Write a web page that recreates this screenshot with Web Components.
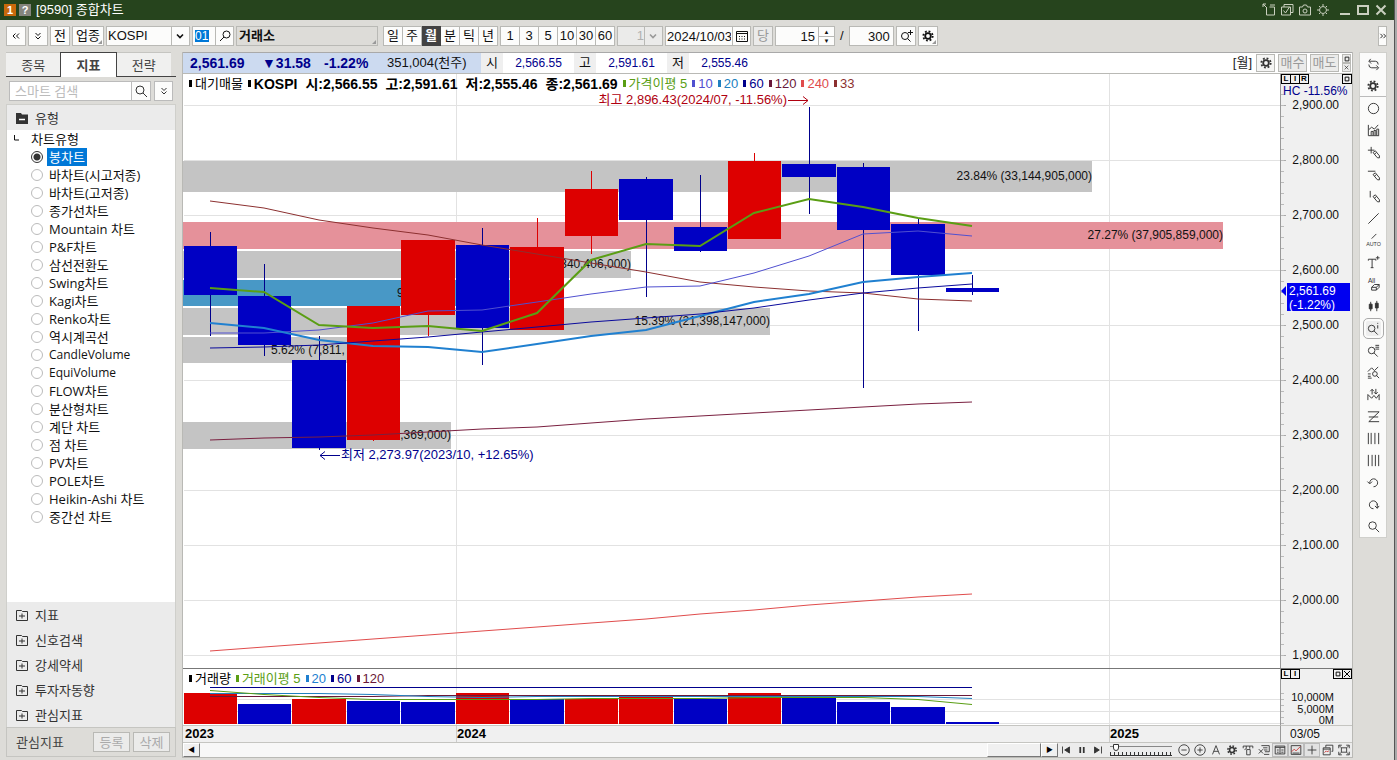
<!DOCTYPE html>
<html lang="ko">
<head>
<meta charset="utf-8">
<title>[9590] 종합차트</title>
<style>
html,body{margin:0;height:100%}
body{font:13px/16px "Liberation Sans","Noto Sans CJK KR",sans-serif;color:#111;background:#dddcd8}
</style>
</head>
<body>
<chart-window>
  <title-bar slot="title">[9590] 종합차트</title-bar>
  <tool-bar slot="tools"></tool-bar>
  <side-panel slot="side"></side-panel>
  <chart-panel slot="main"></chart-panel>
  <draw-tools slot="draw"></draw-tools>
</chart-window>
<script>
const gear='<circle cx="8" cy="8" r="2.8" stroke-width="1.8"/><circle cx="8" cy="8" r="4.7" stroke-width="1.8" stroke-dasharray="1.85 1.84"/>';
const pencil='<path d="M7.5 8l4.5 5.5 2.2.3.2-2.2L10 6.2zM9 9.8l2.2-1.8"/>';
const ICONS={
 gear,
 dleft:'<path d="M7.500 5.500L5 8l2.500 2.500M11 5.500L8.500 8l2.500 2.500"/>',
 dright:'<path d="M5 5.500L7.500 8 5 10.500M8.500 5.500L11 8l-2.500 2.500"/>',
 ddown:'<path d="M5.500 5L8 7.500 10.500 5M5.500 8.500L8 11l2.500-2.500"/>',
 down:'<path stroke-width="1.600" d="M5 6.500L8 9.500l3-3"/>',
 search:'<circle cx="7" cy="7" r="4"/><path d="M10 10l4 4"/>',
 searchl:'<circle cx="9.500" cy="6.500" r="3.500"/><path d="M7 9l-4 4"/>',
 searchp:'<circle cx="7" cy="8" r="3.500"/><path d="M9.500 10.500l3 3M12.500 2v5M10 4.500h5"/>',
 cal:'<path d="M2.500 3.500h11v10h-11zM2.500 5.500h11"/><path stroke-dasharray="1 1.500" d="M5 8.500h7M5 11h7"/>',
 detach:'<path d="M5.500 5.500v7.500h8V5h-5M2 2l4 4M2 5V2h3M9 3h5"/>',
 copy:'<path d="M5 5V2.500h9v8h-2M2.500 5h9v8h-9zM4.500 8.500l2 2.500 4-6"/>',
 camera:'<path d="M2.500 5h3l1-2h3l1 2h3v8h-11z"/><circle cx="8" cy="9" r="2"/>',
 sun:'<circle cx="8" cy="8" r="3.500"/><path d="M8 2v2M8 12v2M2 8h2M12 8h2M4 4l1 1M11 11l1 1M12 4l-1 1M5 11l-1 1"/>',
 min:'<path stroke-width="2" d="M3 12h10"/>',
 max:'<path stroke-width="2" d="M3 4h10v8H3z"/>',
 close:'<path stroke-width="2" d="M3.500 3.500l9 9M12.500 3.500l-9 9"/>',
 swap:'<path d="M5 2L3 4.500 5.500 7M3.500 4.500H10q3 0 3 3.500M11 9l2.500 2.500-2.500 2.500M12.500 11.500H6q-3 0-3-3.500"/>',
 circle:'<circle cx="8" cy="8" r="5.500"/>',
 bars:'<path d="M2.500 2v11.500H14M3 7l3-2.500 3 2 4-4.500M5.500 13V9h2v4M8.500 13V8h2v5M11.500 13V6.500h2V13"/>',
 crosspen:'<path d="M2 5.500h7M5.500 2v7"/>'+pencil,
 linepen:'<path d="M2 4.500h8"/>'+pencil,
 vertpen:'<path d="M4.500 2v7"/>'+pencil,
 diag:'<path d="M2.500 13.500l11-11"/>',
 auto:'<path d="M6 6l5-5"/><text x="8" y="14" text-anchor="middle" font-size="5.700" fill="currentColor" stroke="none" font-family="Liberation Sans">AUTO</text>',
 tplus:'<path d="M2.500 6V4.500h8V6M6.500 4.500v9M5 13.500h3M10.500 3h4M12.500 1v4"/>',
 all:'<text x="2" y="6" font-size="7" fill="currentColor" stroke="none" font-family="Liberation Sans">All</text><path d="M6 11l3-3h5l-3 3zM6 11v3h5v-3M11 14l3-3V8"/>',
 candles:'<path d="M5 3v10M11.500 2v11"/><path fill="currentColor" d="M3.500 5.500h3v5h-3zM10 4.500h3v5h-3z"/>',
 searchi:'<circle cx="6" cy="8" r="3.500"/><path d="M8.500 10.500l4 4M12.500 4.500V8M12.500 2v1"/>',
 searche:'<circle cx="6" cy="8" r="3.500"/><path d="M8.500 10.500l4 4M10 2.500h4M10 4.500h4M10 6.500h4"/>',
 searchw:'<path d="M2 7l4-4 3 3 4-4M2 9.500h3M2 12h3M2 14h4"/><circle cx="9.500" cy="9.500" r="2.500"/><path d="M11 11l3 3"/>',
 updown:'<path d="M2 14V8l4 4 2.500-3L11 12l3-4v6M6.500 8V2.500M4.500 4.500l2-2 2 2M10.500 2v5.500M8.500 5.500l2 2 2-2"/>',
 zed:'<path d="M2 3h12L3 13.500h11M3 8.500h10"/>',
 v1:'<path d="M2.500 2v12M5.500 2v12M9.500 2v12M13.500 2v12"/>',
 v2:'<path d="M2.500 2v12M6.500 2v12M10 2v12M13.500 2v12"/>',
 undo:'<path d="M4 8.500A4.200 4.200 0 1 1 8 12.500M1.500 7L4 9.500 6.500 7"/>',
 redo:'<path d="M12 8.500A4.200 4.200 0 1 0 8 12.500M9.500 9.500l2.500 2.500 2-2.500M12 7v5"/>',
 first:'<path d="M4 4v8"/><path fill="currentColor" d="M12 4.500v7L6.500 8z"/>',
 pause:'<path stroke-width="2" d="M6 4.500v7M10 4.500v7"/>',
 last:'<path d="M12 4v8"/><path fill="currentColor" d="M4 4.500v7L9.500 8z"/>',
 minus:'<circle cx="8" cy="8" r="6"/><path d="M5 8h6"/>',
 plus:'<circle cx="8" cy="8" r="6"/><path d="M5 8h6M8 5v6"/>',
 aa:'<path d="M4 13L8 3l4 10M5.500 9.500h5"/>',
 tool:'<path d="M2.500 6V3.500h11V6M6 3.500v3l-2 1M10 3.500v3M6.500 13.500v-6h4v6z"/>',
 xchart:'<path d="M5 3h9v7H9M2 7l5 5M7 7l-5 5M7 5.500h5M8 8h4M8 13h6"/>',
 table:'<path d="M2.500 3.500h11v9h-11zM2.500 5h11"/><path d="M4.500 8h2M9.500 8h2.500M4.500 10.500h2M9.500 10.500h2.500M8 5.500v7"/>',
 chart:'<path d="M2.500 3h11v10h-11z"/><path stroke="#c33" d="M3 10l3-3 2 2 5-5"/><path d="M4 11.500h8"/>',
 cross:'<path d="M8 3v10M3 8h10"/>',
 wins:'<path d="M5.500 5V2.500h8v7H12M2.500 5.500h8v8h-8zM2.500 7h8"/><path stroke="#c33" d="M4 11l2-2 1 1 2-1"/>',
 full:'<path d="M2 6V2.500h3.500M10.500 2.500H14V6M14 10v3.500h-3.500M5.500 13.500H2V10M5 5.500h6v5H5zM2.500 3L5 5.500M13.500 3L11 5.500M13.500 13L11 10.500M2.500 13L5 10.500"/>',
 folderopen:'<path fill="currentColor" stroke="none" d="M2 3h5l1 1.500h6V14H2z"/><path stroke="#fff" stroke-width="1.500" d="M5 9.500h6"/>',
 folder:'<path d="M2.500 3.500h5l1 1h5v9h-11zM5 9h6M8 6.500v5"/>',
 corner:'<path d="M3.500 4v5H8"/>',
 box:'<path stroke-width="2.500" d="M3 3h10v10H3z"/>',
 x:'<path stroke-width="2" d="M2 2l12 12M14 2L2 14"/>'
};
const icon=(n,s=16)=>`<svg class="ic" width="${s}" height="${s}" viewBox="0 0 16 16" fill="none" stroke="currentColor" aria-hidden="true">${ICONS[n]}</svg>`;
const BASE=`*,:host{box-sizing:border-box}.ic{display:block;flex:none;overflow:visible}
button,input,select{font:inherit;color:inherit;margin:0;padding:0;border-radius:0;outline:0}
button{display:flex;align-items:center;justify-content:center;background:none;border:0}`;
function make(tag,css,html,ready){
  const t=document.createElement('template');
  t.innerHTML=`<style>${BASE}${css}</style>${html}`;
  customElements.define(tag,class extends HTMLElement{
    constructor(){super();this.attachShadow({mode:'open'}).append(t.content.cloneNode(true));}
    connectedCallback(){if(ready)ready.call(this,this.shadowRoot);}
  });
}

make('chart-window',`
:host{display:flex;flex-direction:column;height:100vh;min-height:600px;background:#dddcd8;border-right:2px solid #a9a9a9;box-shadow:inset -1px 0 #555}
.body{flex:1;display:flex;min-height:0;padding:0 8px 2px 6px;align-items:stretch}
.side{width:170px;margin-right:6px;padding-bottom:1px;display:flex}
.main{flex:1;min-width:0;display:flex;margin-right:6px}
slot[name=draw]{display:block}
.side ::slotted(*),.main ::slotted(*){flex:1;min-width:0}`,
`<slot name="title"></slot><slot name="tools"></slot>
<div class="body"><div class="side"><slot name="side"></slot></div><div class="main"><slot name="main"></slot></div><slot name="draw"></slot></div>`);

make('title-bar',`
:host{display:flex;align-items:center;height:20px;flex:none;margin-right:1px;padding:0 5px 0 4px;background:#26441d;color:#fff}
.n{width:12px;height:12px;font:bold 11px/12px "Liberation Sans";text-align:center;background:#c8690c;margin-right:3px}
.q{background:#85857d;margin-right:5px}
.sp{flex:1}.w{color:#c9cfbf;display:flex;gap:2px}`,
`<span class="n">1</span><span class="n q">?</span><span><slot></slot></span><span class="sp"></span>
<span class="w"><button aria-label="분리">${icon('detach')}</button><button aria-label="복사">${icon('copy')}</button><button aria-label="캡처">${icon('camera')}</button><button aria-label="설정">${icon('sun')}</button></span>
<span class="w" style="margin-left:6px"><button aria-label="최소화">${icon('min')}</button><button aria-label="최대화">${icon('max')}</button><button aria-label="닫기">${icon('close')}</button></span>`);

make('tool-group',`:host{display:flex;gap:0}`,`<slot></slot>`);

make('tool-bar',`
:host{display:flex;flex:none;height:32px;align-items:center;gap:2px;padding:0 6px 0 6px;font-size:13px}
button,.box{height:20px;border:1px solid #b9b9b5;background:#fcfcfb}
button{width:20px;position:relative}
tool-group button{width:19px;border-left-width:0}
tool-group button:first-child{width:20px;border-left-width:1px}
.days{margin-left:3px}
.on{background:#424242;color:#fff;font-weight:bold;border-color:#424242}
.wide{width:32px}
.corner::after{content:"";position:absolute;right:1px;bottom:1px;border:2px solid #999;border-left-color:transparent;border-top-color:transparent}
.box{display:flex;align-items:center;position:relative}
.box input,.box select{border:0;background:none;width:100%;height:18px;padding:0 1px;appearance:none;min-width:0}
.box .ic{position:absolute;right:1px;pointer-events:none}
.box button{border:0;border-left:1px solid #b9b9b5;height:18px;width:18px;flex:none}
.box button .ic{position:static}
.box.arrow::before{content:"";position:absolute;right:17px;top:0;bottom:0;border-left:1px solid #b9b9b5}
.r input,.r select{text-align:right;text-align-last:right;padding-right:3px}
.dis{color:#999;background:#ebebea}
.box input.code{width:14px;flex:none;padding:0;margin-left:2px;font-size:12px;background:linear-gradient(#0078d7,#0078d7) 0 3px/14px 12px no-repeat;color:#fff}
.name{width:142px;padding-left:2px;background:#dddcd8;font-weight:bold}
.spin{display:flex;flex-direction:column;border-left:1px solid #b9b9b5}
.spin button{height:9px;width:15px;border:0;font-size:6px;line-height:8px}
.spin button+button{border-top:1px solid #b9b9b5}
.sp{flex:1}.more{width:9px;margin-right:2px}`,
`<button aria-label="이전">${icon('dleft')}</button><button aria-label="목록">${icon('ddown')}</button><button>전</button><button class="wide corner">업종</button>
<span class="box arrow" style="width:84px"><select aria-label="시장"><option>KOSPI</option></select>${icon('down')}</span>
<span class="box" style="width:42px"><input class="code" aria-label="업종코드" value="01"><span class="sp"></span><button aria-label="찾기">${icon('searchl')}</button></span>
<span class="box name corner">거래소</span>
<tool-group class="days"><button>일</button><button>주</button><button class="on">월</button><button>분</button><button>틱</button><button>년</button></tool-group>
<tool-group><button>1</button><button>3</button><button>5</button><button>10</button><button>30</button><button>60</button></tool-group>
<span class="box arrow r dis" style="width:46px"><select aria-label="간격" disabled style="padding-right:18px"><option>1</option></select>${icon('down')}</span>
<span class="box" style="width:86px"><input aria-label="날짜" value="2024/10/03"><button aria-label="달력">${icon('cal')}</button></span>
<button disabled class="dis">당</button>
<span class="box r" style="width:60px"><input aria-label="표시 개수" value="15"><span class="spin"><button aria-label="증가">▲</button><button aria-label="감소">▼</button></span></span>
<span style="padding:0 3px">/</span>
<span class="box r" style="width:45px"><input aria-label="전체 개수" value="300"></span>
<button aria-label="확대">${icon('searchp')}</button><button class="corner" aria-label="설정">${icon('gear')}</button>
<span class="sp"></span><button class="more" aria-label="더보기">${icon('dright',14)}</button>`);

const TYPES=['봉차트','바차트(시고저종)','바차트(고저종)','종가선차트','Mountain 차트','P&amp;F차트','삼선전환도','Swing차트','Kagi차트','Renko차트','역시계곡선','CandleVolume','EquiVolume','FLOW차트','분산형차트','계단 차트','점 차트','PV차트','POLE차트','Heikin-Ashi 차트','중간선 차트'];
make('side-group',`
:host{display:block}
button{width:100%;height:25px;justify-content:flex-start;gap:5px;padding-left:7px;color:#333}`,
`<button><span class="i"></span><slot></slot></button>`,
function(r){r.querySelector('.i').innerHTML=icon(this.hasAttribute('open')?'folderopen':'folder');});

make('side-panel',`
:host{display:flex;flex-direction:column;font-family:"Open Sans","Noto Sans CJK KR",sans-serif}
.tabs{display:flex;height:25px;border-bottom:1px solid #444;flex:none}
.tabs button{flex:1;background:#f0f0ef;border-top:1px solid #c5c5c1;color:#444}
.tabs .on{background:#fff;border:1px solid #444;border-bottom:0;margin-bottom:-1px;font-weight:bold}
.tabs button:last-child{margin-right:5px}
.search{display:flex;padding:4px 3px 3px;flex:none}
.search input{flex:1;min-width:0;height:20px;border:1px solid #bbb;background:#fff;padding:0 5px}
.search input::placeholder{color:#bbb;opacity:1}
.search button{width:19px;height:20px;border:1px solid #bbb;border-left:0;background:#fcfcfb;color:#333}
.search button:last-child{border-left:1px solid #bbb;margin-left:3px}
.panel{flex:1;display:flex;flex-direction:column;background:#fff;border:1px solid #cfcfcb;border-bottom:0;min-height:0}
.head{background:#ebebeb}
.tree{flex:1;overflow:hidden;font-size:12px}
.ko{font-size:13px}
.root{display:flex;align-items:center;height:18px;padding-left:4px;gap:4px;font-size:13px}
label{display:flex;align-items:center;height:18px;padding-left:24px;gap:4px}
label input{appearance:none;width:12px;height:12px;border:1px solid #bbb;border-radius:50%;background:#fff;flex:none}
label input:checked{border-color:#333;background:radial-gradient(circle,#333 0 3px,#fff 4px)}
label span{padding:0 2px;line-height:18px}
label input:checked+span{background:#0078d7;color:#fff}
.groups{background:#ebebeb;height:125px;flex:none}
.foot{display:flex;height:30px;flex:none;align-items:center;gap:3px;padding:0 5px 0 9px;border:1px solid #c5c5c1;color:#444}
.foot span{flex:1}
.foot button{width:37px;height:20px;border:1px solid #b9b9b5;background:#ebebea;color:#aaa}`,
`<div class="tabs"><button>종목</button><button class="on">지표</button><button>전략</button></div>
<div class="search"><input aria-label="검색" placeholder="스마트 검색"><button aria-label="검색">${icon('search')}</button><button aria-label="펼치기">${icon('ddown')}</button></div>
<div class="panel"><side-group class="head" open>유형</side-group>
<div class="tree"><div class="root">${icon('corner')}<span>차트유형</span></div>${TYPES.map((t,i)=>`<label${/^[A-Z][A-Za-z]+$/.test(t)?'':' class="ko"'}><input type="radio" name="t"${i?'':' checked'}><span>${t}</span></label>`).join('')}</div>
<div class="groups"><side-group>지표</side-group><side-group>신호검색</side-group><side-group>강세약세</side-group><side-group>투자자동향</side-group><side-group>관심지표</side-group></div></div>
<div class="foot"><span>관심지표</span><button disabled>등록</button><button disabled>삭제</button></div>`);

make('draw-tools',`
:host{display:flex;flex-direction:column;width:28px;background:#fbfbfa;border:1px solid #d0d0cc}
button{width:26px;height:22px;color:#333}
.gear{border-bottom:1px solid #bbb}
.on .ic{outline:1px solid #aaa;outline-offset:2px;background:#eee;border-radius:2px}`,
['swap','gear','circle','bars','crosspen','linepen','vertpen','diag','auto','tplus','all','candles','searchi','searche','searchw','updown','zed','v1','v2','undo','redo','search'].map(n=>`<button class="${n=='searchi'?'on':n}" aria-label="${n}">${icon(n,n=='gear'?16:15)}</button>`).join(''));

make('quote-bar',`
:host{display:flex;height:22px;flex:none;align-items:stretch;background:#fff;border-top:1px solid #a9a9a9;border-bottom:1px solid #b9b9b5;font-size:12px;line-height:20px;color:#00008c}
.now{display:flex;width:298px;background:#ccdaf0;padding-left:7px;font-size:14px;font-weight:bold}
.now span:nth-child(1){width:72px}.now span:nth-child(2){width:62px}.now span:nth-child(3){width:63px}
.now .vol{font-size:13px;font-weight:normal;color:#111}
.k{width:22px;background:#efefef;color:#111;text-align:center;font-size:13px}
.v{width:71px;text-align:center}
.sp{flex:1}.m{color:#222;margin-right:4px;font-size:13px}
.b{display:flex;gap:3px;align-items:center;padding-right:1px}
.b button{width:29px;height:18px;border:1px solid #b9b9b5;background:#ebebea;color:#999;font-size:13px}
.b .g{width:19px;background:#f5f5f4;color:#333}
.mini{display:flex;flex-direction:column}.b .mini button{width:9px;height:9px;color:#222}`,
`<div class="now"><span>2,561.69</span><span>▼31.58</span><span>-1.22%</span><span class="vol">351,004(천주)</span></div>
<span class="k">시</span><span class="v">2,566.55</span><span class="k">고</span><span class="v">2,591.61</span><span class="k">저</span><span class="v">2,555.46</span>
<span class="sp"></span><span class="m">[월]</span>
<div class="b"><button class="g" aria-label="설정">${icon('gear')}</button><button>매수</button><button>매도</button><span class="mini"><button aria-label="최대화">${icon('box',6)}</button><button aria-label="닫기">${icon('x',5)}</button></span></div>`);

make('legend-item',`
:host{display:flex;align-items:center;gap:3px;white-space:nowrap}
i{width:3px;height:7px;background:currentColor}`,`<i></i><slot></slot>`);

make('box-keys',`
:host{display:flex}
button{width:10px;height:10px;border:1px solid #000;font:bold 8px/8px "Liberation Sans";color:#000;margin-right:-1px}
.sp{flex:1}`,``,
function(r){const k=s=>(s||'').split(' ').map(c=>`<button aria-label="${c}">${ICONS[c]?icon(c,c=='box'?6:8):c}</button>`).join('');
 r.innerHTML+=k(this.getAttribute('left'))+'<span class="sp"></span>'+k(this.getAttribute('right'));});

/* Drawing units: one plot is 1097 wide from x=183; heights start at the plot's own top. */
const XS=[210,264,319,373,428,482,537,591,646,700,754,809,863,918,972];
const EDGE=[184,238,292,347,401,456,510,565,619,674,728,782,837,891,946,1000];
const RED='#dd0000',BLUE='#0000c4';
const CANDLES=[[0,246,295,232,336],[0,296,345,264,356],[0,360,448,336,450],[1,306,440,306,441],[1,240,315,240,336],[0,245,328,228,365],[1,247,330,218,330],[1,189,236,171,254],[0,179,220,177,297],[0,227,251,175,252],[1,161,239,153,239],[0,164,177,107,214],[0,167,230,163,388],[0,224,275,219,331],[0,288,292,275,295]];
const BANDS=[[161,192,1092,'#c4c4c4'],[222,249,1223,'#e5919a'],[251,278,631,'#c4c4c4'],[280,306,530,'#4898c6'],[308,335,770,'#c4c4c4'],[337,363,397,'#c4c4c4'],[422,449,451,'#c4c4c4']];
const LABELS=[[1092,180,'end','23.84% (33,144,905,000)'],[1223,239,'end','27.27% (37,905,859,000)'],[631,268,'end','340,406,000)'],[397,297,'start','9'],[770,325,'end','15.39% (21,398,147,000)'],[271,354,'start','5.62% (7,811,'],[451,439,'end',',369,000)']];
const MA=[['#7a2040',1,[440,438,437,435,432,429,427,423,419,416,413,410,407,404,402]],['#e04c4c',1,[651,647,643,639,635,631,627,623,619,614,610,605,601,597,594]],['#8c3030',1,[201,208,220,228,235,245,254,263,272,282,287,291,293,299,301]],['#5050d0',1,[333,333,330,323,311,310,302,294,287,286,273,256,234,231,236]],['#2080d0',2,[323,328,340,346,347,352,344,336,330,316,302,294,282,277,273]],['#0a0a9c',1,[348,347,345,341,337,332,327,322,318,314,308,300,293,288,284]],['#5a9e14',2,[288,292,325,328,326,331,313,260,244,246,213,199,207,218,226]]];
const VOL=[[1,693],[0,704],[1,699],[0,701],[0,702],[1,693],[0,699],[1,699],[1,697],[0,699],[1,693],[0,697],[0,702],[0,707],[0,722]];
const VMA=[['#00008c',[687,687,687,687,687,687,687,687,687,687,687,687,687,687,687]],['#6a1838',[696,696,696,696,695,695,695,695,695,695,695,695,695,695,695]],['#2080c0',[693,693,693,694,696,697,696,696,696,696,696,696,696,696,698]],['#5a9e14',[690,694,697,699,699,699,699,698,698,698,697,697,697,699,704]]];
const rect=(x,y,w,h,f)=>`<rect x="${x}" y="${y}" width="${Math.max(1,w)}" height="${Math.max(1,h)}" fill="${f}" shape-rendering="crispEdges"/>`;
const poly=(pts,c,w)=>`<polyline points="${pts}" fill="none" stroke="${c}" stroke-width="${w}"/>`;
function plot(tag,top,high,draw,vw=1097,left=183){
  make(tag,`:host{display:block;min-width:0;min-height:0;overflow:hidden;position:relative}
svg{display:block;position:absolute;inset:0;width:100%;height:100%;font:12px "Liberation Sans","Noto Sans CJK KR",sans-serif}`,`<svg></svg>`,
  function(r){
    const svg=r.querySelector('svg');
    const paint=()=>{const b=this.getBoundingClientRect();if(!b.width)return;
      const sx=b.width/vw,sy=b.height/high;
      svg.innerHTML=draw(x=>Math.round((x-left)*sx),y=>Math.round((y-top)*sy));};
    new ResizeObserver(paint).observe(this);
  });
}
const GRID='#e2e2e2';
plot('price-plot',74,594,(X,Y)=>{
  let s='';
  for(let y=105;y<=655;y+=55)s+=rect(X(184),Y(y),X(1281)-X(184),1,GRID);
  for(const x of [456,1109])s+=rect(X(x),0,1,Y(668),GRID);
  for(const [a,b,e,c] of BANDS)s+=rect(0,Y(a),X(e),Y(b)-Y(a),c);
  for(const [x,y,a,t] of LABELS)s+=`<text x="${X(x)}" y="${Y(y)}" text-anchor="${a}" fill="#111">${t}</text>`;
  CANDLES.forEach(([up,a,b,h,l],i)=>{const c=up?RED:BLUE;
    s+=rect(X(XS[i]),Y(h),1,Y(l)-Y(h),up?RED:'#00008c')+rect(X(EDGE[i]),Y(a),X(EDGE[i+1])-X(EDGE[i])-1,Y(b)-Y(a),c);});
  for(const [c,w,v] of MA)s+=poly(v.map((y,i)=>X(XS[i])+','+Y(y)).join(' '),c,w);
  s+=`<text x="${X(787)}" y="${Y(104)}" text-anchor="end" fill="#b00010" font-size="13">최고 2,896.43(2024/07, -11.56%)</text><path d="M${X(788)} ${Y(100)+.5}h20m-5-4l5 4l-5 4" fill="none" stroke="#b00010"/>`;
  s+=`<text x="${X(341)}" y="${Y(459)}" fill="#00008c" font-size="13">최저 2,273.97(2023/10, +12.65%)</text><path d="M${X(340)} ${Y(455)+.5}h-20m5-4l-5 4l5 4" fill="none" stroke="#00008c"/>`;
  return s;
});
plot('volume-plot',669,56,(X,Y)=>{
  let s='';
  for(const y of [699,711,723])s+=rect(X(184),Y(y),X(1281),1,GRID);
  for(const x of [456,1109])s+=rect(X(x),0,1,Y(725),GRID);
  VOL.forEach(([up,y],i)=>{s+=rect(X(EDGE[i]),Y(y),X(EDGE[i+1])-X(EDGE[i])-1,Y(724)-Y(y),up?RED:BLUE);});
  for(const [c,v] of VMA)s+=poly(v.map((y,i)=>X(XS[i])+','+(Y(y)+.5)).join(' '),c,1);
  return s;
});
plot('date-axis',726,16,(X,Y)=>{
  let s='';
  for(const [x,t] of [[184,'2023'],[456,'2024'],[1109,'2025']])s+=(x>184?rect(X(x),0,1,Y(742),'#ccc'):'')+`<text x="${X(x)+1}" y="${Y(738)}" font-size="13" font-weight="bold" fill="#000">${t}</text>`;
  return s;
});
plot('price-axis',74,594,(X,Y)=>{
  let s='';
  for(let y=105,p=2900;y<=655;y+=55,p-=100){
    s+=rect(0,Y(y),5,1,'#aaa');
    s+=`<text x="${X(1339)}" y="${Y(y)+4}" text-anchor="end" fill="#111">${p.toLocaleString('en-US')}.00</text>`;
  }
  for(let y=94;y<660;y+=11)s+=rect(0,Y(y),3,1,'#bbb');
  s+=`<text x="${X(1283)}" y="${Y(95)}" fill="#00008c">HC -11.56%</text>`;
  s+=rect(X(1287),Y(283),63,28,'#0000f0')+`<path d="M${X(1286)} ${Y(286)}v10l-5-5z" fill="#0000f0"/>`;
  s+=`<text x="${X(1289)}" y="${Y(295)}" fill="#fff">2,561.69</text><text x="${X(1289)}" y="${Y(309)}" fill="#fff">(-1.22%)</text>`;
  return s;
},71,1281);
plot('volume-axis',669,56,(X,Y)=>{
  let s='';
  for(const [y,t] of [[701,'10,000M'],[713,'5,000M'],[724,'0M']])s+=`<text x="${X(1334)}" y="${Y(y)}" text-anchor="end" font-size="11" fill="#111">${t}</text>`;
  for(let y=693;y<724;y+=6)s+=rect(0,Y(y),3,1,'#bbb');
  return s;
},71,1281);

make('chart-foot',`
:host{display:flex;height:16px;flex:none;background:#ececec;border-top:1px solid #c5c5c1;border-bottom:1px solid #b9b9b5;color:#333}
.bar{flex:1;display:flex;background:#f7f7f7}
.bar button,.thumb{width:17px;height:14px;background:#f0f0f0;border:1px solid #fff;border-right-color:#777;border-bottom-color:#777;font-size:7px;color:#000}
.bar .thumb{width:54px}.sp{flex:1}
.t{display:flex}.t button{width:16px;height:14px}
.t .on{background:#e2e2e2;box-shadow:0 0 0 1px #bbb inset}
.r{width:70px;padding:1px 4px 0}
.r input{display:block;width:62px;height:7px;appearance:none;background:linear-gradient(#888,#888) 0 2px/100% 1px no-repeat}
.r input::-webkit-slider-thumb{appearance:none;width:6px;height:7px;background:#fff;border:1px solid #333;border-radius:0 0 3px 3px}
.r i{display:block;height:4px;margin-top:1px;background:repeating-linear-gradient(90deg,#333 0 1px,transparent 1px 4px);border-bottom:1px solid #333}`,
`<div class="bar"><button aria-label="왼쪽">◀</button><span class="sp"></span><span class="thumb"></span><button aria-label="오른쪽">▶</button></div>
<div class="t">${['first','pause','last'].map(n=>`<button aria-label="${n}">${icon(n,14)}</button>`).join('')}</div>
<div class="r"><input type="range" aria-label="속도" value="5"><i></i></div>
<div class="t">${['minus','plus','aa','gear','tool','xchart','table','chart','cross','wins','full'].map((n,i)=>`<button class="${i>5&&i<9?'on':''}" aria-label="${n}">${icon(n,14)}</button>`).join('')}</div>`);

make('chart-panel',`
:host{display:flex;flex-direction:column;background:#fff;border-left:1px solid #b9b9b5;border-right:1px solid #b9b9b5}
.grid{flex:1;min-height:0;display:grid;grid-template-columns:minmax(0,1fr) 72px;grid-template-rows:minmax(0,1fr) 57px 17px}
.cell{position:relative;display:grid;min-width:0;min-height:0}
.cell>*{grid-area:1/1}
.ax{background:#f0f0f0;border-left:1px solid #999}
.line{border-top:1px solid #777}
.date{background:#f0f0f0;border-top:1px solid #c5c5c1}
.md{padding-left:9px;font-size:12px;line-height:16px}
.leg{position:relative;align-self:start;display:flex;gap:5px;padding:1px 0 0 6px;line-height:16px;height:18px;overflow:hidden}
.leg b{font-size:14px}
.leg .q{display:flex;gap:8px}
box-keys{align-self:start;position:relative;padding-right:1px}`,
`<quote-bar></quote-bar>
<div class="grid">
<div class="cell"><price-plot></price-plot><div class="leg"><legend-item style="color:#000">대기매물</legend-item><legend-item style="color:#000"><b class="q"><span>KOSPI</span><span>시:2,566.55</span><span>고:2,591.61</span><span>저:2,555.46</span><span>종:2,561.69</span></b></legend-item><legend-item style="color:#5a9e14">가격이평 5</legend-item><legend-item style="color:#5050d0">10</legend-item><legend-item style="color:#2080c0">20</legend-item><legend-item style="color:#00008c">60</legend-item><legend-item style="color:#6a1838">120</legend-item><legend-item style="color:#e04c4c">240</legend-item><legend-item style="color:#8c3030">33</legend-item></div></div>
<div class="cell ax"><price-axis></price-axis><box-keys left="L I R" right="box"></box-keys></div>
<div class="cell line"><volume-plot></volume-plot><div class="leg"><legend-item style="color:#000">거래량</legend-item><legend-item style="color:#5a9e14">거래이평 5</legend-item><legend-item style="color:#2080d0">20</legend-item><legend-item style="color:#00008c">60</legend-item><legend-item style="color:#6a1838">120</legend-item></div></div>
<div class="cell ax line"><volume-axis></volume-axis><box-keys left="L I" right="box x"></box-keys></div>
<div class="cell date"><date-axis></date-axis></div>
<div class="cell date ax md"><span>03/05</span></div>
</div>
<chart-foot></chart-foot>`);
</script>
</body>
</html>
